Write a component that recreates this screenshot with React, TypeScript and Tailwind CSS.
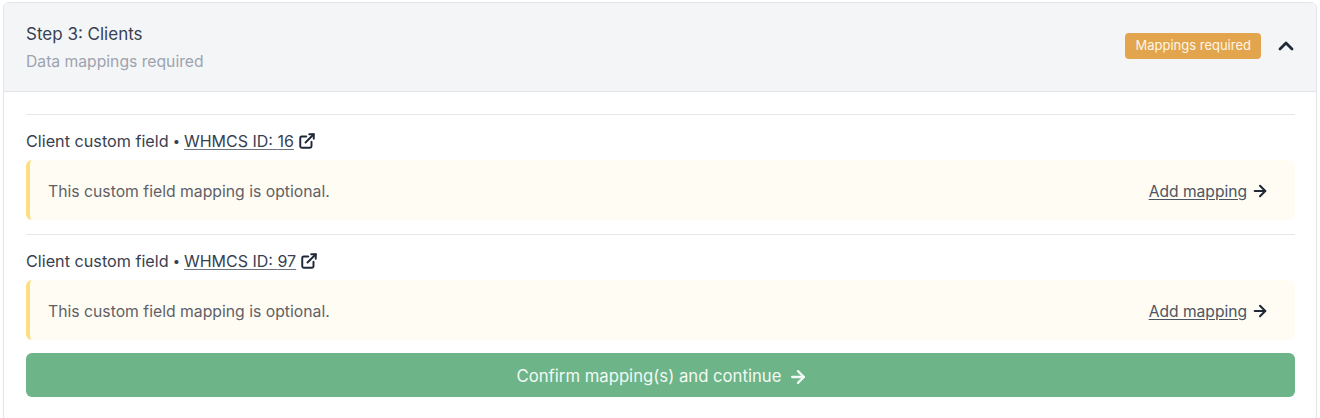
import { ChevronUp, ArrowRight, ExternalLink } from 'lucide-react';

const fields = [16, 97];

function MappingRow({ id }: { id: number }) {
  return (
    <div className="border-t border-[#e5e7eb] pt-[17px]">
      <div className="flex items-center h-[18px] text-[16px] leading-[18px] text-[#374151]">
        <span className="text-[16.2px]">Client custom field</span>
        <span className="ml-[4px] mr-[4px] text-[13px]">•</span>
        <a className="underline underline-offset-2 decoration-[#6b7280]">WHMCS ID: {id}</a>
        <ExternalLink className="w-[18px] h-[18px] ml-[4px] text-[#1f2937]" strokeWidth={2.6} />
      </div>
      <div className="mt-[10px] h-[60px] flex items-center justify-between rounded-md border-l-4 border-[#fcdf83] bg-[#fffcf4] pl-[18px] pr-[26px] pt-[3px]">
        <p className="text-[15.75px] text-[#5f6167]">This custom field mapping is optional.</p>
        <a className="flex items-center text-[15.6px] text-[#4b5563]">
          <span className="underline underline-offset-2">Add mapping</span>
          <ArrowRight className="w-[18px] h-[18px] ml-[4px] text-[#1f2937]" strokeWidth={2.8} />
        </a>
      </div>
    </div>
  );
}

export default function App() {
  return (
    <div className="h-[418px] bg-white pt-[2px] px-[3px] font-['Inter',sans-serif] overflow-hidden">
      <div className="rounded-md border border-[#e2e4e8] h-[420px] overflow-hidden">
        {/* Header */}
        <div className="h-[89px] flex items-center justify-between bg-[#f4f5f7] border-b border-[#e2e4e8] pl-[22px] pr-[18px]">
          <div className="pt-[1px]">
            <h2 className="text-[17px] leading-[24px] text-[#374151]">Step 3: Clients</h2>
            <p className="mt-[4px] text-[15.7px] leading-[24px] text-[#9ca3af]">Data mappings required</p>
          </div>
          <div className="flex items-center pb-[2px]">
            <span className="flex items-center h-[26px] px-[10px] rounded bg-[#e2a54d] text-[13px] text-[#fdf6e8]">
              Mappings required
            </span>
            <ChevronUp className="w-[24px] h-[24px] ml-[13px] text-[#1f2937]" strokeWidth={2.8} />
          </div>
        </div>

        {/* Body */}
        <div className="pt-[22px] pl-[22px] pr-[21px]">
          <div className="flex flex-col gap-[14px]">
            {fields.map((id) => (
              <MappingRow key={id} id={id} />
            ))}
          </div>
          <button className="mt-[13px] w-full h-[44px] flex items-center justify-center rounded-md bg-[#6db488] text-[16.7px] text-[#f3f9f5] pl-[4px] pt-[3px]">
            Confirm mapping(s) and continue
            <ArrowRight className="w-[20px] h-[20px] ml-[7px]" strokeWidth={2.8} />
          </button>
        </div>
      </div>
    </div>
  );
}
